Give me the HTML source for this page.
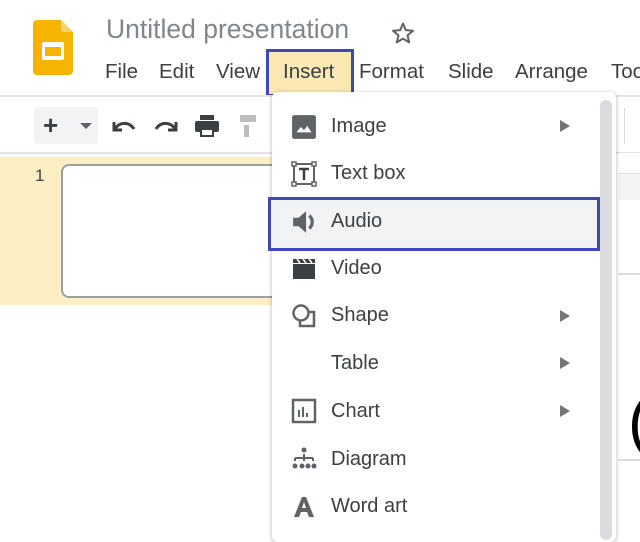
<!DOCTYPE html>
<html><head><style>
body{margin:0;width:640px;height:531px;overflow:hidden;background:#fff;font-family:"Liberation Sans",Arial,sans-serif;position:relative;color:#3c4043}
.a{position:absolute}
.mi{position:absolute;left:331px;font-size:20px;color:#3c4043;line-height:24px}
.arr{position:absolute;left:560px;width:0;height:0;border-left:10px solid #757575;border-top:6px solid transparent;border-bottom:6px solid transparent}
.ic{position:absolute;left:291px}
</style></head><body>
<svg class="a" style="left:33px;top:20px" width="40" height="55" viewBox="0 0 40 55"><path d="M4 0H28L40 12V51a4 4 0 0 1-4 4H4a4 4 0 0 1-4-4V4a4 4 0 0 1 4-4z" fill="#f4b400"/><path d="M28 0L40 12H31a3 3 0 0 1-3-3z" fill="#f8d06b"/><rect x="9" y="22" width="22" height="18" rx="2" fill="#fff"/><rect x="12" y="27" width="16" height="9" fill="#f4b400"/></svg>
<div class="a" style="left:106px;top:14px;font-size:26.5px;color:#80868b">Untitled presentation</div>
<svg class="a" style="left:391px;top:21px" width="24" height="24" viewBox="0 0 24 24"><path d="M12 2.5l2.8 6.6 7.2.6-5.5 4.7 1.7 7-6.2-3.8-6.2 3.8 1.7-7L2 9.7l7.2-.6z" fill="none" stroke="#5f6368" stroke-width="2" stroke-linejoin="round"/></svg>
<div class="a" style="left:266px;top:49px;width:82px;height:42px;background:#fce8b2;border:3px solid #3f48b8"></div>
<div class="a" style="top:60px;left:0;font-size:20.5px;color:#3c4043;white-space:nowrap">
<span class="a" style="left:105px">File</span><span class="a" style="left:159px">Edit</span><span class="a" style="left:216px">View</span><span class="a" style="left:283px">Insert</span><span class="a" style="left:359px">Format</span><span class="a" style="left:448px">Slide</span><span class="a" style="left:515px">Arrange</span><span class="a" style="left:611px">Tools</span></div>
<div class="a" style="left:0;top:95px;width:640px;height:2px;background:#e3e3e3"></div>
<div class="a" style="left:34px;top:107px;width:64px;height:37px;background:#f1f3f4;border-radius:3px"></div>
<div class="a" style="left:43px;top:111px;font-size:26px;font-weight:bold;color:#3c4043;line-height:28px">+</div>
<div class="a" style="left:80px;top:123px;border-top:6px solid #5f6368;border-left:6px solid transparent;border-right:6px solid transparent"></div>
<svg class="a" style="left:110px;top:114px" width="28" height="24" viewBox="0 0 28 24"><path d="M4 8v8h8" fill="none" stroke="#3c4043" stroke-width="3"/><path d="M5 15C9 8 19 7 24 15" fill="none" stroke="#3c4043" stroke-width="3"/></svg>
<svg class="a" style="left:152px;top:114px" width="28" height="24" viewBox="0 0 28 24"><path d="M24 8v8h-8" fill="none" stroke="#3c4043" stroke-width="3"/><path d="M23 15C19 8 9 7 4 15" fill="none" stroke="#3c4043" stroke-width="3"/></svg>
<svg class="a" style="left:194px;top:113px" width="26" height="26" viewBox="0 0 26 26"><rect x="6" y="2" width="14" height="5" fill="#3c4043"/><rect x="1" y="8" width="24" height="11" rx="2" fill="#3c4043"/><rect x="6" y="15" width="14" height="9" fill="#3c4043"/><rect x="8" y="17" width="10" height="5" fill="#fff"/></svg>
<svg class="a" style="left:238px;top:113px" width="20" height="26" viewBox="0 0 20 26"><rect x="2" y="2" width="16" height="7" fill="#bdbdbd"/><rect x="6" y="12" width="5" height="12" fill="#bdbdbd"/></svg>
<div class="a" style="left:0;top:152px;width:640px;height:2px;background:#e3e3e3"></div>
<div class="a" style="left:0;top:157px;width:272px;height:148px;background:#fdefc3"></div>
<div class="a" style="left:35px;top:166px;font-size:17px;color:#3c4043">1</div>
<div class="a" style="left:61px;top:164px;width:240px;height:130px;background:#fff;border:2px solid #9e9e9e;border-radius:8px"></div>
<div class="a" style="left:624px;top:108px;width:1px;height:36px;background:#dadce0"></div>
<div class="a" style="left:618px;top:153px;width:22px;height:20px;background:#fff;border-bottom:1px solid #e0e0e0"></div>
<div class="a" style="left:618px;top:174px;width:22px;height:26px;background:#f1f3f4"></div>
<div class="a" style="left:618px;top:273px;width:22px;height:2px;background:#dadce0"></div>
<div class="a" style="left:628px;top:386px;font-size:64px;color:#000;line-height:70px">(</div>
<div class="a" style="left:618px;top:459px;width:22px;height:2px;background:#dadce0"></div>
<div class="a" style="left:272px;top:92px;width:344px;height:450px;background:#fff;border-radius:6px;box-shadow:0 1px 4px rgba(0,0,0,.3)"></div>
<div class="a" style="left:600px;top:100px;width:12px;height:440px;background:#dadce0;border-radius:6px"></div>
<div class="a" style="left:268px;top:197px;width:326px;height:48px;background:#f1f3f4;border:3px solid #3f48b8"></div>
<svg class="ic" style="top:114px" width="26" height="26" viewBox="0 0 24 24"><rect x="1" y="1" width="22" height="22" rx="2" fill="#5f6368"/><path d="M5 17l4-5 3 3 3-4 4 6z" fill="#fff"/></svg>
<div class="mi" style="top:114px">Image</div><div class="arr" style="top:120px"></div>
<svg class="ic" style="top:161px" width="26" height="26" viewBox="0 0 26 26"><rect x="3" y="3" width="20" height="20" fill="none" stroke="#5f6368" stroke-width="2"/><rect x="1" y="1" width="4" height="4" fill="#fff" stroke="#5f6368" stroke-width="1.5"/><rect x="21" y="1" width="4" height="4" fill="#fff" stroke="#5f6368" stroke-width="1.5"/><rect x="1" y="21" width="4" height="4" fill="#fff" stroke="#5f6368" stroke-width="1.5"/><rect x="21" y="21" width="4" height="4" fill="#fff" stroke="#5f6368" stroke-width="1.5"/><path d="M8 8h10M13 8v11" stroke="#3c4043" stroke-width="2.5"/></svg>
<div class="mi" style="top:161px">Text box</div>
<svg class="ic" style="top:208px" width="28" height="28" viewBox="0 0 26 26"><path d="M2 9h5l7-6v20l-7-6H2z" fill="#5f6368"/><path d="M17 7a8 8 0 0 1 0 12" fill="none" stroke="#5f6368" stroke-width="3"/></svg>
<div class="mi" style="top:209px">Audio</div>
<svg class="ic" style="top:256px" width="26" height="26" viewBox="0 0 26 26"><rect x="2" y="8" width="22" height="15" fill="#3c4043"/><path d="M2 3h22v4H2z" fill="#3c4043"/><path d="M6 3l3 4M12 3l3 4M18 3l3 4" stroke="#fff" stroke-width="1.5"/></svg>
<div class="mi" style="top:256px">Video</div>
<svg class="ic" style="top:303px" width="26" height="26" viewBox="0 0 26 26"><circle cx="10" cy="10" r="7.5" fill="none" stroke="#5f6368" stroke-width="2.5"/><path d="M18 9h5v14H9v-5" fill="none" stroke="#5f6368" stroke-width="2.5"/></svg>
<div class="mi" style="top:303px">Shape</div><div class="arr" style="top:310px"></div>
<div class="mi" style="top:351px">Table</div><div class="arr" style="top:357px"></div>
<svg class="ic" style="top:398px" width="26" height="26" viewBox="0 0 26 26"><rect x="2" y="2" width="22" height="22" fill="none" stroke="#5f6368" stroke-width="2.5"/><path d="M8 12v7M12 9v10M16 15v4" stroke="#5f6368" stroke-width="2"/></svg>
<div class="mi" style="top:399px">Chart</div><div class="arr" style="top:405px"></div>
<svg class="ic" style="top:446px" width="26" height="26" viewBox="0 0 26 26"><circle cx="13" cy="4" r="2.5" fill="#5f6368"/><path d="M4 12h18M4 12v3M13 8v7M22 12v3" stroke="#5f6368" stroke-width="2"/><circle cx="4" cy="20" r="2.5" fill="#5f6368"/><circle cx="11" cy="20" r="2.5" fill="#5f6368"/><circle cx="17" cy="20" r="2.5" fill="#5f6368"/><circle cx="23" cy="20" r="2.5" fill="#5f6368"/></svg>
<div class="mi" style="top:447px">Diagram</div>
<svg class="ic" style="top:494px" width="26" height="26" viewBox="0 0 26 26"><path d="M3 23L11 3h4l8 20h-5l-2-5H10l-2 5z" fill="#5f6368"/><path d="M11 14h4l-2-6z" fill="#fff"/></svg>
<div class="mi" style="top:494px">Word art</div>
</body></html>
